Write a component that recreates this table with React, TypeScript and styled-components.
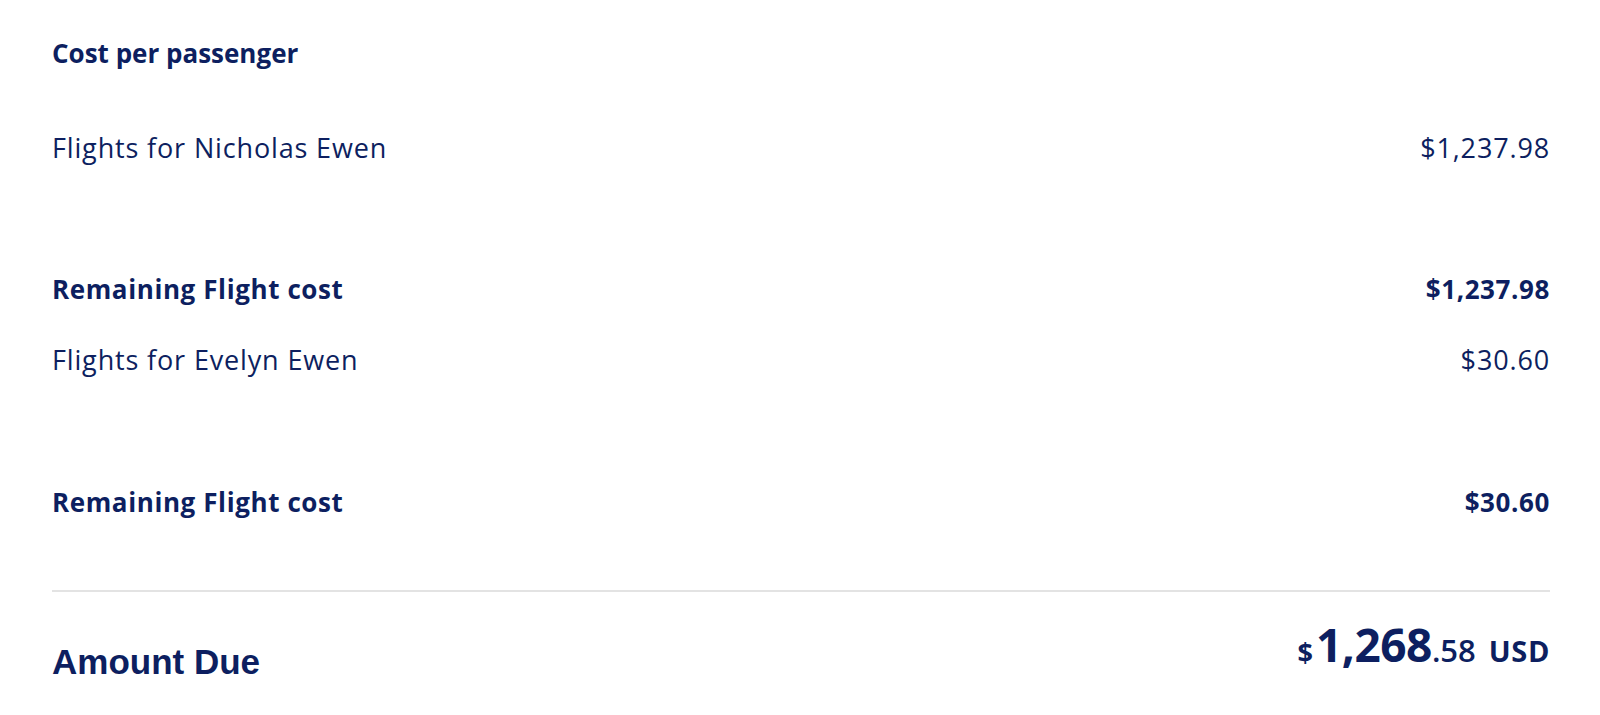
import React from "react";
import styled, { createGlobalStyle } from "styled-components";

const NAVY = "#0d1f60";

const Global = createGlobalStyle`
  html, body { margin: 0; padding: 0; background: #ffffff; }
  body { font-family: "Open Sans", "Noto Sans", Arial, sans-serif; color: ${NAVY}; }
`;

const Page = styled.main`
  display: flex;
  flex-direction: column;
  padding: 37px 50px 0 52px;
`;

const Heading = styled.h2`
  margin: 0;
  font-size: 26px;
  line-height: 32px;
  font-weight: 700;
`;

const Groups = styled.div`
  display: flex;
  flex-direction: column;
  gap: 39px;
  margin-top: 63px;
`;

const Group = styled.section<{ $gap: number }>`
  display: flex;
  flex-direction: column;
  gap: ${(p) => p.$gap}px;
`;

const Row = styled.div<{ $bold?: boolean }>`
  display: flex;
  justify-content: space-between;
  align-items: baseline;
  font-size: ${(p) => (p.$bold ? 26 : 27)}px;
  line-height: 32px;
  font-weight: ${(p) => (p.$bold ? 700 : 500)};
  letter-spacing: ${(p) => (p.$bold ? "0.6px" : "0.85px")};
`;

const Divider = styled.hr`
  margin: 72px 0 0 0;
  border: 0;
  height: 2px;
  background: #e3e3e3;
`;

const TotalRow = styled.div`
  display: flex;
  justify-content: space-between;
  align-items: flex-start;
  margin-top: 40px;
`;

const TotalLabel = styled.div`
  font-family: "Liberation Sans", Arial, sans-serif;
  font-weight: 700;
  font-size: 35px;
  line-height: 40px;
  margin-top: 10px;
`;

const Amount = styled.div`
  display: flex;
  align-items: baseline;
  font-weight: 700;
  line-height: 50px;
  margin-top: -13px;
`;

const Currency = styled.span`
  font-size: 27px;
  margin-right: 3px;
`;

const Whole = styled.span`
  font-size: 46px;
  letter-spacing: -0.5px;
`;

const Cents = styled.span`
  font-size: 31px;
  font-weight: 600;
`;

const Code = styled.span`
  font-size: 29px;
  letter-spacing: 0.6px;
  margin-left: 13px;
`;

const passengers = [
  { name: "Nicholas Ewen", cost: "$1,237.98", gap: 109 },
  { name: "Evelyn Ewen", cost: "$30.60", gap: 110 },
];

export default function App() {
  return (
    <>
      <Global />
      <Page>
        <Heading>Cost per passenger</Heading>
        <Groups>
          {passengers.map((p) => (
            <Group key={p.name} $gap={p.gap}>
              <Row>
                <span>Flights for {p.name}</span>
                <span>{p.cost}</span>
              </Row>
              <Row $bold>
                <span>Remaining Flight cost</span>
                <span>{p.cost}</span>
              </Row>
            </Group>
          ))}
        </Groups>
        <Divider />
        <TotalRow>
          <TotalLabel>Amount Due</TotalLabel>
          <Amount>
            <Currency>$</Currency>
            <Whole>1,268</Whole>
            <Cents>.58</Cents>
            <Code>USD</Code>
          </Amount>
        </TotalRow>
      </Page>
    </>
  );
}
